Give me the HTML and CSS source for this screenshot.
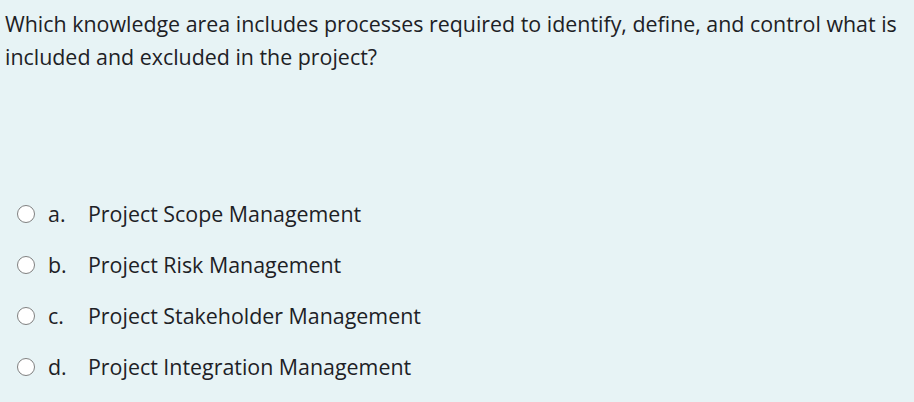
FILE: index.html
```html
<!DOCTYPE html>
<html><head><link rel="stylesheet" href="styles.css"></head>
<body>
<div class="que">
  <div class="qtext">Which knowledge area includes processes required to identify, define, and control what is included and excluded in the project?</div>
  <div class="answers">
    <label class="opt"><span class="radio"></span><span class="letter">a.</span><span class="label">Project Scope Management</span></label>
    <label class="opt"><span class="radio"></span><span class="letter">b.</span><span class="label">Project Risk Management</span></label>
    <label class="opt"><span class="radio"></span><span class="letter">c.</span><span class="label">Project Stakeholder Management</span></label>
    <label class="opt"><span class="radio"></span><span class="letter">d.</span><span class="label">Project Integration Management</span></label>
  </div>
</div>
</body></html>
```
FILE: styles.css
```css
html,body{margin:0;padding:0}
body{background:#e7f3f5;color:#1d2125;font-family:"Open Sans","Noto Sans",sans-serif;font-size:21.4px;line-height:33px}
.que{padding:7px 0 0 5px;width:909px}
.qtext{width:904px}
.answers{margin-top:115px;display:flex;flex-direction:column}
.opt{display:flex;align-items:center;height:51px;padding-left:12px}
.radio{width:16px;height:16px;border:1.6px solid #808080;border-radius:50%;background:#fff;flex:none}
.letter{margin-left:13px;width:40px;flex:none}
.label{white-space:nowrap}
```
